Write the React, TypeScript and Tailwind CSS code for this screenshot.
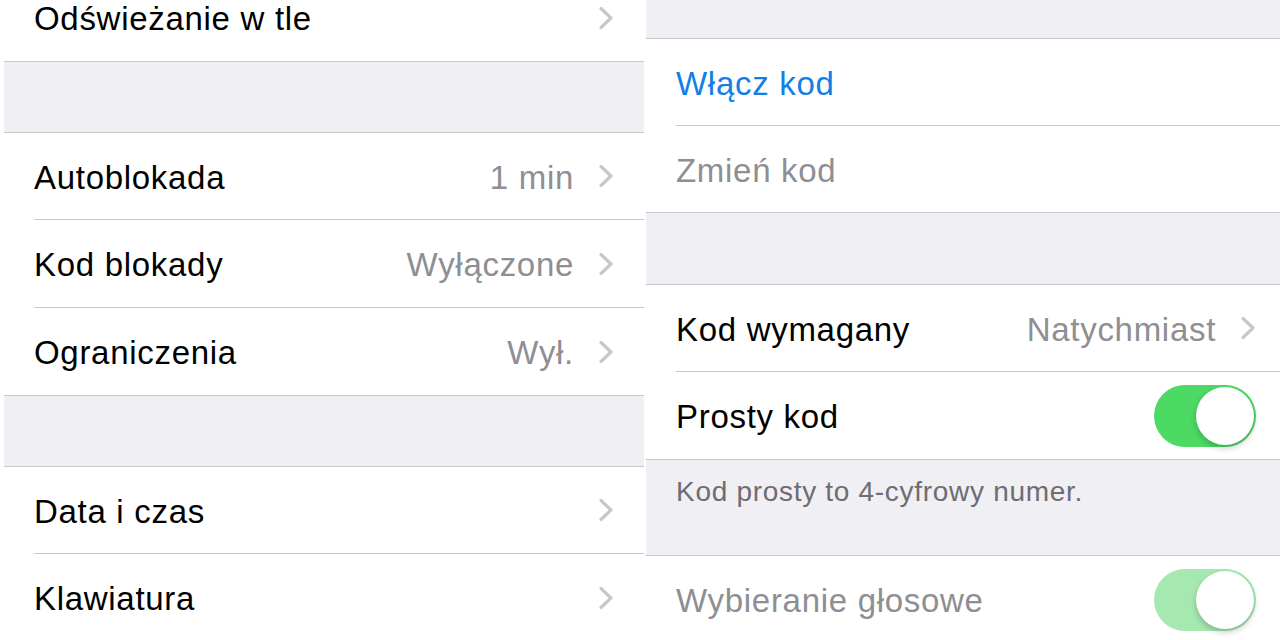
import React from 'react';

type RowProps = {
  label: string;
  value?: string;
  chevron?: boolean;
  toggle?: 'on' | 'disabled';
  tone?: 'normal' | 'link' | 'muted';
  tall?: boolean;
};

const toneClass = {
  normal: 'text-black',
  link: 'text-[#137fe6]',
  muted: 'text-[#8e8e93]',
};

function Chevron() {
  return (
    <svg width="16" height="24" viewBox="0 0 16 24" className="shrink-0">
      <polyline points="3,2.5 13,12 3,21.5" fill="none" stroke="#c7c7cc" strokeWidth="3.2" strokeLinecap="round" strokeLinejoin="round" />
    </svg>
  );
}

function Toggle({ disabled }: { disabled?: boolean }) {
  return (
    <div
      className={`relative w-[102px] h-[62px] rounded-full ${disabled ? 'bg-[#a5e9b1]' : 'bg-[#4cd964]'}`}
    >
      <div className="absolute right-[2px] top-[2px] w-[58px] h-[58px] rounded-full bg-white shadow-[0_3px_6px_rgba(0,0,0,0.22)]" />
    </div>
  );
}

function Row({ label, value, chevron, toggle, tone = 'normal', tall }: RowProps) {
  return (
    <div className={`flex ${tall ? 'h-[87px]' : 'h-[86px]'} items-center pl-[30px] pr-[30px]`}>
      <span className={`flex-1 pt-[3px] text-[33px] tracking-[0.7px] ${toneClass[tone]}`}>{label}</span>
      {value && <span className="pt-[3px] text-[33px] tracking-[0.7px] text-[#8e8e93] mr-[24px]">{value}</span>}
      {chevron && <Chevron />}
      {toggle && <Toggle disabled={toggle === 'disabled'} />}
    </div>
  );
}

function Group({ rows, className = '' }: { rows: RowProps[]; className?: string }) {
  return (
    <div className={`bg-white border-y border-[#c8c7cc] ${className}`}>
      {rows.map((r, i) => (
        <div key={r.label}>
          {i > 0 && <div className="h-px ml-[30px] bg-[#c8c7cc]" />}
          <Row {...r} />
        </div>
      ))}
    </div>
  );
}

function GeneralSettings() {
  return (
    <div className="w-[640px] shrink-0 bg-[#efeff4]">
      <Group className="mt-[-27px]" rows={[{ label: 'Odświeżanie w tle', chevron: true, tall: true }]} />
      <div className="h-[70px]" />
      <Group
        rows={[
          { label: 'Autoblokada', value: '1 min', chevron: true },
          { label: 'Kod blokady', value: 'Wyłączone', chevron: true, tall: true },
          { label: 'Ograniczenia', value: 'Wył.', chevron: true, tall: true },
        ]}
      />
      <div className="h-[70px]" />
      <Group
        rows={[
          { label: 'Data i czas', chevron: true },
          { label: 'Klawiatura', chevron: true, tall: true },
        ]}
      />
    </div>
  );
}

function PasscodeSettings() {
  return (
    <div className="w-[640px] shrink-0 bg-[#efeff4]">
      <div className="h-[38px]" />
      <Group
        rows={[
          { label: 'Włącz kod', tone: 'link' },
          { label: 'Zmień kod', tone: 'muted' },
        ]}
      />
      <div className="h-[71px]" />
      <Group
        rows={[
          { label: 'Kod wymagany', value: 'Natychmiast', chevron: true },
          { label: 'Prosty kod', toggle: 'on', tall: true },
        ]}
      />
      <div className="h-[95px] pl-[30px] pt-[11px] text-[28px] tracking-[0.7px] text-[#6d6d72]">
        Kod prosty to 4-cyfrowy numer.
      </div>
      <Group rows={[{ label: 'Wybieranie głosowe', toggle: 'disabled', tone: 'muted', tall: true }]} />
    </div>
  );
}

export default function App() {
  return (
    <div
      className="w-[1280px] h-[640px] overflow-hidden bg-white flex pl-[4px] gap-[2px]"
      style={{ fontFamily: '"Liberation Sans", Arial, sans-serif' }}
    >
      <GeneralSettings />
      <PasscodeSettings />
    </div>
  );
}
